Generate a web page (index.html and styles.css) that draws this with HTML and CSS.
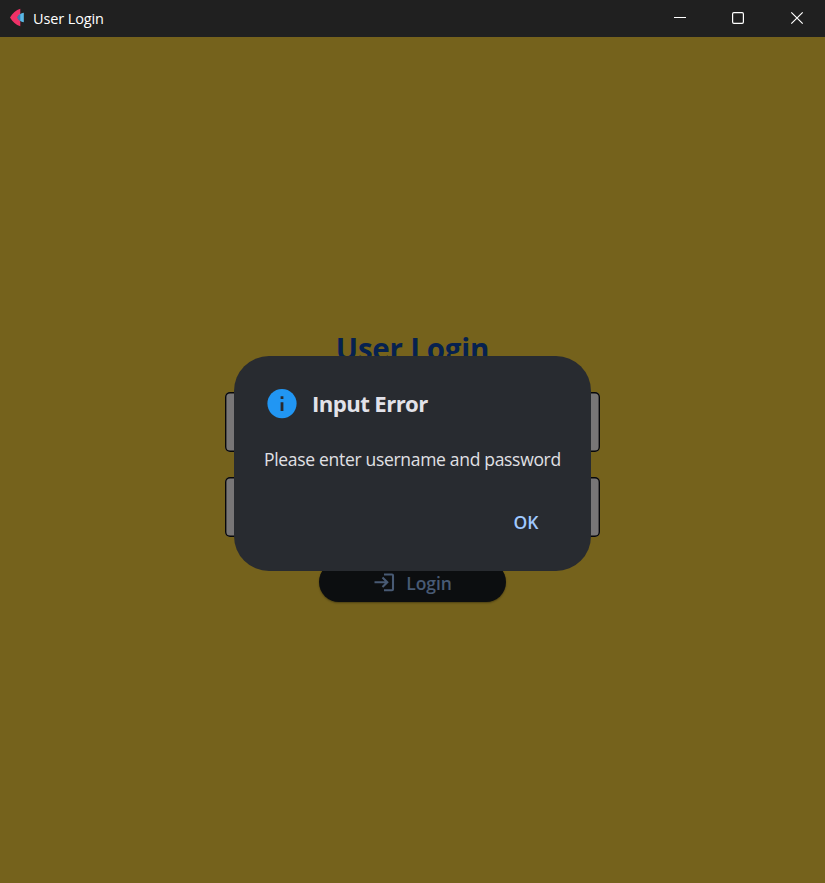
FILE: index.html
```html
<!DOCTYPE html>
<html lang="en">
<head>
<meta charset="utf-8">
<title>User Login</title>
<link rel="stylesheet" href="styles.css">
</head>
<body>
<div class="window">
  <header class="titlebar">
    <svg class="logo" width="16" height="20" viewBox="0 0 16 20">
      <path d="M0 9.500C2.500 5.500 6 2 10.300.8V6C9 7 8 8 7.300 9.500C8 11 9 12 10.300 13V18.200C6 17 2.500 13.500 0 9.500Z" fill="#ee3167"/>
      <path d="M7.300 9.500C8.500 7 11 5 13.800 4.700V14.300C11 14 8.500 12 7.300 9.500Z" fill="#5ab8e6"/>
      <path d="M7.300 9.500C8 8 9 7 10.300 6V13C9 12 8 11 7.300 9.500Z" fill="#3b78b0"/>
    </svg>
    <span class="caption">User Login</span>
    <div class="controls">
      <svg width="58" height="36" viewBox="0 0 58 36"><path d="M23 17.500H35" stroke="#fff"/></svg>
      <svg width="58" height="36" viewBox="0 0 58 36"><rect x="23.600" y="12.600" width="10.800" height="10.800" rx="1.300" fill="none" stroke="#fff" stroke-width="1.200"/></svg>
      <svg width="58" height="36" viewBox="0 0 58 36"><path d="M24.300 12.300L35.700 23.700M35.700 12.300L24.300 23.700" stroke="#fff" stroke-width="1.200"/></svg>
    </div>
  </header>
  <main class="page">
    <h1 class="heading">User Login</h1>
    <div class="field"></div>
    <div class="field"></div>
    <div class="login">
      <svg class="login-icon" width="22" height="22" viewBox="0 0 22 22" fill="none" stroke="#485a74" stroke-width="2.100">
        <path d="M.5 10.300H13M8.500 5.500L13.300 10.300L8.500 15.100"/>
        <path d="M10 2.500H18Q19 2.500 19 3.500V17.200Q19 18.200 18 18.200H10"/>
      </svg>
      <span class="login-text">Login</span>
    </div>
  </main>
  <section class="dialog" role="dialog">
    <div class="dialog-head">
      <svg width="30" height="30" viewBox="0 0 30 30">
        <circle cx="15" cy="14.600" r="14.600" fill="#2196f3"/>
        <path d="M13.600 7.300H16.400V10.100H13.600ZM13.600 13.200H16.400V22.100H13.600Z" fill="#282a2f"/>
      </svg>
      <h2 class="dialog-title">Input Error</h2>
    </div>
    <p class="message">Please enter username and password</p>
    <div class="actions"><span class="ok">OK</span></div>
  </section>
</div>
</body>
</html>
```
FILE: styles.css
```css
* { box-sizing: border-box; }
body { margin: 0; font-family: "Open Sans", "Noto Sans", sans-serif; }
.window {
  position: relative;
  width: 825px;
  height: 883px;
  overflow: hidden;
  background: #75621c;
}
.titlebar {
  display: flex;
  align-items: flex-start;
  height: 37px;
  padding-left: 10px;
  background: #202020;
}
.logo { margin-top: 8px; }
.caption {
  margin-left: 7px;
  font-size: 14.5px;
  line-height: 37px;
  letter-spacing: -0.12px;
  color: #fff;
}
.controls { display: flex; margin-left: auto; }
.page {
  display: flex;
  flex-direction: column;
  align-items: center;
  gap: 25px;
  padding-top: 290px;
}
.heading {
  margin: 0;
  height: 40px;
  font-size: 29.5px;
  line-height: 44px;
  font-weight: 700;
  letter-spacing: -0.2px;
  color: #06214f;
  white-space: nowrap;
}
.field {
  width: 375px;
  height: 60px;
  border-radius: 5px;
  background: #787677;
  box-shadow: inset 0 0 0 1.4px #08080a;
}
.login {
  display: flex;
  align-items: center;
  justify-content: center;
  width: 187px;
  height: 40px;
  border-radius: 20px;
  background: #0c0e10;
  box-shadow: 0 1px 2px rgba(0, 0, 0, .35);
}
.login-icon { margin: 2px 0 0 1px; }
.login-text {
  margin-left: 10px;
  padding-top: 1px;
  font-size: 17.5px;
  line-height: 24px;
  font-weight: 600;
  letter-spacing: -0.1px;
  color: #485a74;
}
.dialog {
  position: absolute;
  left: 234px;
  top: 356px;
  width: 357px;
  height: 215px;
  padding: 33px 30px 0;
  border-radius: 35px;
  background: #282b30;
}
.dialog-head { display: flex; align-items: center; height: 30px; padding-left: 3px; }
.dialog-title {
  margin: 0 0 0 15px;
  font-size: 22.2px;
  line-height: 30px;
  font-weight: 700;
  letter-spacing: -0.6px;
  color: #e2e2e9;
  white-space: nowrap;
}
.message {
  margin: 28px 0 0;
  font-size: 17.5px;
  line-height: 25px;
  letter-spacing: -0.31px;
  color: #e0e0e5;
  white-space: nowrap;
}
.actions { display: flex; justify-content: flex-end; margin-top: 38px; padding-right: 22.5px; }
.ok { font-size: 17.5px; line-height: 25px; font-weight: 600; color: #a0c9ff; }
```
